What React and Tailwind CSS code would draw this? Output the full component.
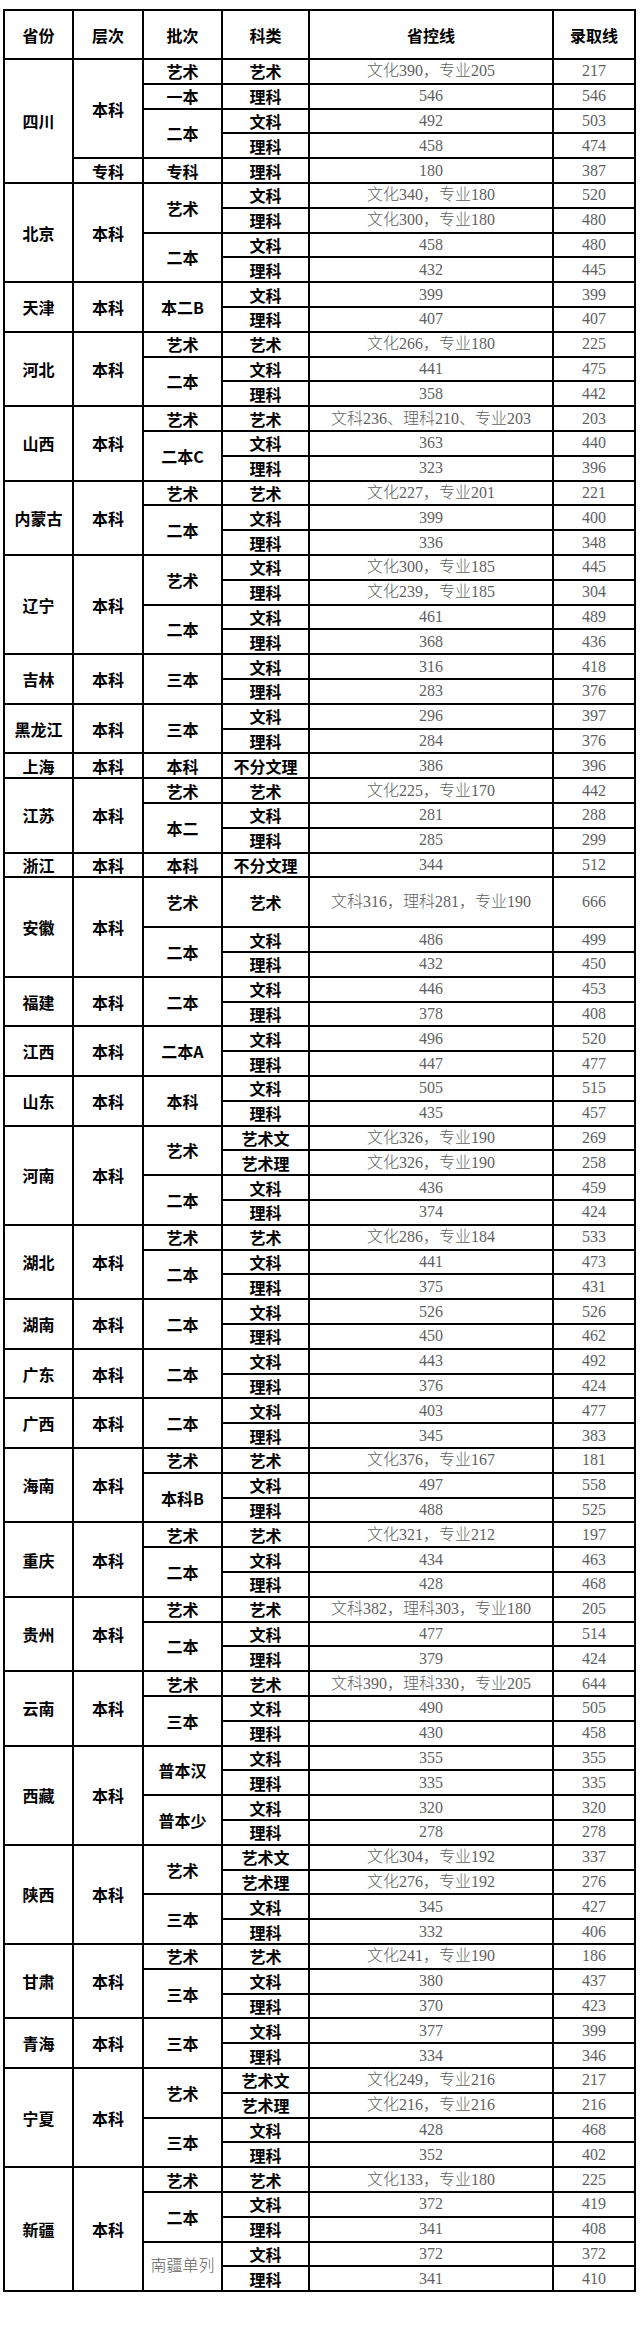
const data = [
  ['四川', [
    ['本科', [
      ['艺术', [['艺术', '文化390，专业205', '217']]],
      ['一本', [['理科', '546', '546']]],
      ['二本', [['文科', '492', '503'], ['理科', '458', '474']]],
    ]],
    ['专科', [
      ['专科', [['理科', '180', '387']]],
    ]],
  ]],
  ['北京', [['本科', [
    ['艺术', [['文科', '文化340，专业180', '520'], ['理科', '文化300，专业180', '480']]],
    ['二本', [['文科', '458', '480'], ['理科', '432', '445']]],
  ]]]],
  ['天津', [['本科', [
    ['本二B', [['文科', '399', '399'], ['理科', '407', '407']]],
  ]]]],
  ['河北', [['本科', [
    ['艺术', [['艺术', '文化266，专业180', '225']]],
    ['二本', [['文科', '441', '475'], ['理科', '358', '442']]],
  ]]]],
  ['山西', [['本科', [
    ['艺术', [['艺术', '文科236、理科210、专业203', '203']]],
    ['二本C', [['文科', '363', '440'], ['理科', '323', '396']]],
  ]]]],
  ['内蒙古', [['本科', [
    ['艺术', [['艺术', '文化227，专业201', '221']]],
    ['二本', [['文科', '399', '400'], ['理科', '336', '348']]],
  ]]]],
  ['辽宁', [['本科', [
    ['艺术', [['文科', '文化300，专业185', '445'], ['理科', '文化239，专业185', '304']]],
    ['二本', [['文科', '461', '489'], ['理科', '368', '436']]],
  ]]]],
  ['吉林', [['本科', [
    ['三本', [['文科', '316', '418'], ['理科', '283', '376']]],
  ]]]],
  ['黑龙江', [['本科', [
    ['三本', [['文科', '296', '397'], ['理科', '284', '376']]],
  ]]]],
  ['上海', [['本科', [
    ['本科', [['不分文理', '386', '396']]],
  ]]]],
  ['江苏', [['本科', [
    ['艺术', [['艺术', '文化225，专业170', '442']]],
    ['本二', [['文科', '281', '288'], ['理科', '285', '299']]],
  ]]]],
  ['浙江', [['本科', [
    ['本科', [['不分文理', '344', '512']]],
  ]]]],
  ['安徽', [['本科', [
    ['艺术', [['艺术', '文科316，理科281，专业190', '666', true]]],
    ['二本', [['文科', '486', '499'], ['理科', '432', '450']]],
  ]]]],
  ['福建', [['本科', [
    ['二本', [['文科', '446', '453'], ['理科', '378', '408']]],
  ]]]],
  ['江西', [['本科', [
    ['二本A', [['文科', '496', '520'], ['理科', '447', '477']]],
  ]]]],
  ['山东', [['本科', [
    ['本科', [['文科', '505', '515'], ['理科', '435', '457']]],
  ]]]],
  ['河南', [['本科', [
    ['艺术', [['艺术文', '文化326，专业190', '269'], ['艺术理', '文化326，专业190', '258']]],
    ['二本', [['文科', '436', '459'], ['理科', '374', '424']]],
  ]]]],
  ['湖北', [['本科', [
    ['艺术', [['艺术', '文化286，专业184', '533']]],
    ['二本', [['文科', '441', '473'], ['理科', '375', '431']]],
  ]]]],
  ['湖南', [['本科', [
    ['二本', [['文科', '526', '526'], ['理科', '450', '462']]],
  ]]]],
  ['广东', [['本科', [
    ['二本', [['文科', '443', '492'], ['理科', '376', '424']]],
  ]]]],
  ['广西', [['本科', [
    ['二本', [['文科', '403', '477'], ['理科', '345', '383']]],
  ]]]],
  ['海南', [['本科', [
    ['艺术', [['艺术', '文化376，专业167', '181']]],
    ['本科B', [['文科', '497', '558'], ['理科', '488', '525']]],
  ]]]],
  ['重庆', [['本科', [
    ['艺术', [['艺术', '文化321，专业212', '197']]],
    ['二本', [['文科', '434', '463'], ['理科', '428', '468']]],
  ]]]],
  ['贵州', [['本科', [
    ['艺术', [['艺术', '文科382，理科303，专业180', '205']]],
    ['二本', [['文科', '477', '514'], ['理科', '379', '424']]],
  ]]]],
  ['云南', [['本科', [
    ['艺术', [['艺术', '文科390，理科330，专业205', '644']]],
    ['三本', [['文科', '490', '505'], ['理科', '430', '458']]],
  ]]]],
  ['西藏', [['本科', [
    ['普本汉', [['文科', '355', '355'], ['理科', '335', '335']]],
    ['普本少', [['文科', '320', '320'], ['理科', '278', '278']]],
  ]]]],
  ['陕西', [['本科', [
    ['艺术', [['艺术文', '文化304，专业192', '337'], ['艺术理', '文化276，专业192', '276']]],
    ['三本', [['文科', '345', '427'], ['理科', '332', '406']]],
  ]]]],
  ['甘肃', [['本科', [
    ['艺术', [['艺术', '文化241，专业190', '186']]],
    ['三本', [['文科', '380', '437'], ['理科', '370', '423']]],
  ]]]],
  ['青海', [['本科', [
    ['三本', [['文科', '377', '399'], ['理科', '334', '346']]],
  ]]]],
  ['宁夏', [['本科', [
    ['艺术', [['艺术文', '文化249，专业216', '217'], ['艺术理', '文化216，专业216', '216']]],
    ['三本', [['文科', '428', '468'], ['理科', '352', '402']]],
  ]]]],
  ['新疆', [['本科', [
    ['艺术', [['艺术', '文化133，专业180', '225']]],
    ['二本', [['文科', '372', '419'], ['理科', '341', '408']]],
    ['南疆单列', [['文科', '372', '372'], ['理科', '341', '410']]],
  ]]]],
];

const bold = "border-2 border-black text-center align-middle font-bold text-black leading-none";
const thin = "border-2 border-black text-center align-middle text-[#5f5f5f] leading-none font-['Liberation_Serif','Noto_Sans_CJK_SC',serif] font-light";

function buildRows() {
  const rows = [];
  data.forEach(([prov, levels]) => {
    const provCount = levels.reduce((n, [, bs]) => n + bs.reduce((m, [, rs]) => m + rs.length, 0), 0);
    levels.forEach(([level, batches], li) => {
      const levelCount = batches.reduce((m, [, rs]) => m + rs.length, 0);
      batches.forEach(([batch, items], bi) => {
        items.forEach(([kind, ctrl, score, tall], ri) => {
          rows.push(
            <tr key={`${prov}-${level}-${batch}-${ri}`} className={tall ? 'h-[50px]' : 'h-[24.8px]'}>
              {li === 0 && bi === 0 && ri === 0 && (
                <td rowSpan={provCount} className={bold}>{prov}</td>
              )}
              {bi === 0 && ri === 0 && (
                <td rowSpan={levelCount} className={bold}>{level}</td>
              )}
              {ri === 0 && (
                <td rowSpan={items.length} className={batch === '南疆单列' ? thin : bold}>{batch}</td>
              )}
              <td className={bold}>{kind}</td>
              <td className={thin}>{ctrl}</td>
              <td className={thin}>{score}</td>
            </tr>
          );
        });
      });
    });
  });
  return rows;
}

export default function App() {
  return (
    <div className="bg-white w-[641px] h-[2335px] pt-[9px] pl-[3px] font-['Noto_Sans_CJK_SC',sans-serif] text-[16px]">
      <table className="w-[631px] table-fixed border-collapse border-2 border-black">
        <colgroup>
          <col className="w-[69px]" />
          <col className="w-[70px]" />
          <col className="w-[79px]" />
          <col className="w-[87px]" />
          <col className="w-[244px]" />
          <col className="w-[82px]" />
        </colgroup>
        <thead>
          <tr className="h-[49px]">
            <th className={bold}>省份</th>
            <th className={bold}>层次</th>
            <th className={bold}>批次</th>
            <th className={bold}>科类</th>
            <th className={bold}>省控线</th>
            <th className={bold}>录取线</th>
          </tr>
        </thead>
        <tbody>{buildRows()}</tbody>
      </table>
    </div>
  );
}
